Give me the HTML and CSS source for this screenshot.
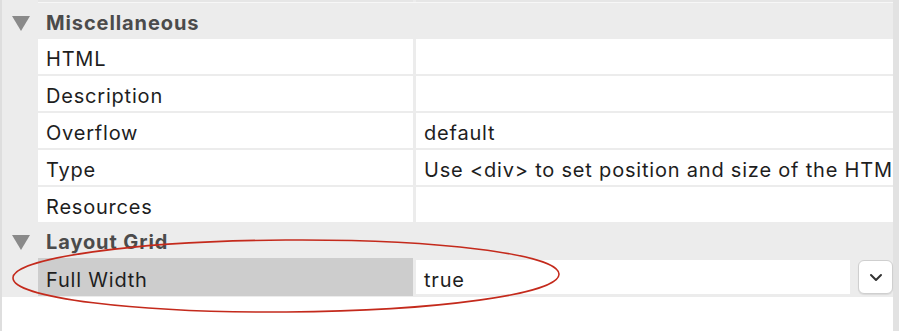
FILE: index.html
```html
<!DOCTYPE html>
<html lang="en">
<head>
<meta charset="UTF-8" />
<title>Inspector</title>
<link rel="stylesheet" href="styles.css">
</head>
<body>
  <div id="inspector">
    <div id="props">
      <div class="sliver"><span></span><span></span></div>

      <div class="group-head"><span class="caret"></span>Miscellaneous</div>
      <div class="prop-list">
        <div class="prop"><div class="prop-name">HTML</div><div class="prop-value"></div></div>
        <div class="prop"><div class="prop-name">Description</div><div class="prop-value"></div></div>
        <div class="prop"><div class="prop-name">Overflow</div><div class="prop-value">default</div></div>
        <div class="prop"><div class="prop-name">Type</div><div class="prop-value">Use &lt;div&gt; to set position and size of the HTML</div></div>
        <div class="prop"><div class="prop-name">Resources</div><div class="prop-value"></div></div>
      </div>

      <div class="group-head"><span class="caret"></span>Layout Grid</div>
      <div class="prop-list">
        <div class="prop selected">
          <div class="prop-name">Full Width</div>
          <div class="prop-value">true</div>
          <button class="drop-btn">
            <svg width="14" height="9" viewBox="0 0 14 9"><path d="M2 2 L7 7 L12 2" fill="none" stroke="#333" stroke-width="2" stroke-linecap="round" stroke-linejoin="round"/></svg>
          </button>
        </div>
      </div>

      <div id="empty"></div>

      <svg id="mark" width="600" height="90" viewBox="0 0 600 90">
        <ellipse cx="286" cy="40" rx="273" ry="36" fill="none" stroke="#c42a1c" stroke-width="1.6" transform="rotate(-0.4 286 40)"/>
      </svg>
    </div>
    <div id="scroll-strip"></div>
  </div>
</body>
</html>
```

FILE: styles.css
```css
body {
  margin: 0;
  font-family: Inter, "Liberation Sans", Arial, sans-serif;
  color: #1e1e1e;
  background-color: #ececec;
}
#inspector {
  display: flex;
  width: 899px;
  height: 331px;
  overflow: hidden;
}
#props {
  position: relative;
  width: 891px;
  border-left: 2px solid #dedede;
  background-color: #ececec;
  display: flex;
  flex-direction: column;
}
#scroll-strip {
  width: 6px;
  background-color: #e2e2e2;
}
.sliver {
  display: grid;
  grid-template-columns: 375px 1fr;
  gap: 3px;
  margin-left: 36px;
  height: 2px;
  border-bottom: 1px solid #f7f7f7;
}
.sliver span {
  background-color: #e6e6e6;
}
.group-head {
  box-sizing: border-box;
  height: 36px;
  padding-top: 4px;
  display: flex;
  align-items: center;
  font-size: 20px;
  font-weight: 700;
  letter-spacing: 0.9px;
  color: #4b4b4b;
}
.caret {
  width: 0;
  height: 0;
  margin: 0 16px 0 10px;
  border-left: 9px solid transparent;
  border-right: 9px solid transparent;
  border-top: 15px solid #8a8a8a;
}
.prop-list {
  display: flex;
  flex-direction: column;
  gap: 2px;
  margin-left: 36px;
}
.prop {
  display: grid;
  grid-template-columns: 375px 1fr;
  gap: 3px;
  height: 35px;
}
.prop-name, .prop-value {
  background-color: #fff;
  padding: 0 8px;
  font-size: 20px;
  line-height: 40px;
  letter-spacing: 0.8px;
  white-space: nowrap;
  overflow: hidden;
}
.prop.selected {
  grid-template-columns: 375px 437px 43px;
  gap: 0;
  height: 38px;
  align-items: center;
}
.prop.selected .prop-name {
  background-color: #cdcdcd;
  height: 38px;
  line-height: 44px;
}
.prop.selected .prop-value {
  height: 34px;
  line-height: 40px;
  margin-left: 3px;
}
.drop-btn {
  margin-left: 8px;
  width: 35px;
  height: 34px;
  padding: 0;
  border: 1px solid #cfcfcf;
  border-radius: 6px;
  background-color: #fff;
  display: flex;
  align-items: center;
  justify-content: center;
  box-shadow: 0 1px 1px rgba(0,0,0,0.08);
}
#empty {
  flex: 1;
  margin-top: 1px;
  background-color: #fff;
}
#mark {
  position: absolute;
  left: -2px;
  top: 236px;
}
```
